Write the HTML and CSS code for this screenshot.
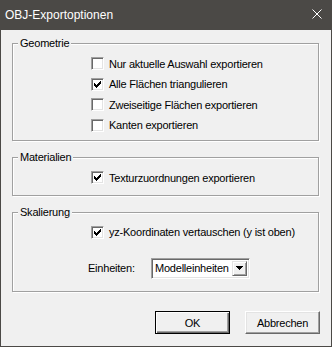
FILE: index.html
```html
<!DOCTYPE html>
<html lang="de">
<head>
<meta charset="utf-8">
<title>OBJ-Exportoptionen</title>
<link rel="stylesheet" href="styles.css">
</head>
<body>
<div class="window">
  <div class="titlebar">
    <span class="title">OBJ-Exportoptionen</span>
    <svg class="close" width="10" height="10" viewBox="0 0 10 10"><path d="M0.5 0.5L9.5 9.5M9.5 0.5L0.5 9.5" stroke="#fff" stroke-width="1" fill="none"/></svg>
  </div>
  <div class="content">
    <div class="group group-geo">
      <div class="legend">Geometrie</div>
      <div class="rows">
        <div class="row"><span class="cb"></span><span>Nur aktuelle Auswahl exportieren</span></div>
        <div class="row"><span class="cb"><svg class="check" width="7" height="7" viewBox="0 0 7 7"><path d="M6,0h1v1h-1z M5,1h2v1h-2z M0,2h1v1h-1z M4,2h3v1h-3z M0,3h2v1h-2z M3,3h3v1h-3z M0,4h5v1h-5z M1,5h3v1h-3z M2,6h1v1h-1z" fill="#000" shape-rendering="crispEdges"/></svg></span><span>Alle Flächen triangulieren</span></div>
        <div class="row"><span class="cb"></span><span>Zweiseitige Flächen exportieren</span></div>
        <div class="row"><span class="cb"></span><span>Kanten exportieren</span></div>
      </div>
    </div>
    <div class="group group-mat">
      <div class="legend">Materialien</div>
      <div class="rows">
        <div class="row"><span class="cb"><svg class="check" width="7" height="7" viewBox="0 0 7 7"><path d="M6,0h1v1h-1z M5,1h2v1h-2z M0,2h1v1h-1z M4,2h3v1h-3z M0,3h2v1h-2z M3,3h3v1h-3z M0,4h5v1h-5z M1,5h3v1h-3z M2,6h1v1h-1z" fill="#000" shape-rendering="crispEdges"/></svg></span><span>Texturzuordnungen exportieren</span></div>
      </div>
    </div>
    <div class="group group-scale">
      <div class="legend">Skalierung</div>
      <div class="rows">
        <div class="row"><span class="cb"><svg class="check" width="7" height="7" viewBox="0 0 7 7"><path d="M6,0h1v1h-1z M5,1h2v1h-2z M0,2h1v1h-1z M4,2h3v1h-3z M0,3h2v1h-2z M3,3h3v1h-3z M0,4h5v1h-5z M1,5h3v1h-3z M2,6h1v1h-1z" fill="#000" shape-rendering="crispEdges"/></svg></span><span>yz-Koordinaten vertauschen (y ist oben)</span></div>
        <div class="unit-row">
          <span class="unit-label">Einheiten:</span>
          <div class="combo">
            <span class="combo-text">Modelleinheiten</span>
            <span class="combo-btn"><svg width="7" height="4" viewBox="0 0 7 4"><path d="M0,0h7v1h-7z M1,1h5v1h-5z M2,2h3v1h-3z M3,3h1v1h-1z" fill="#000" shape-rendering="crispEdges"/></svg></span>
          </div>
        </div>
      </div>
    </div>
    <div class="buttons">
      <div class="btn btn-default">OK</div>
      <div class="btn">Abbrechen</div>
    </div>
  </div>
</div>
</body>
</html>
```
FILE: styles.css
```css
html, body {
  margin: 0;
  padding: 0;
  background: #f0f0f0;
}
.window {
  width: 332px;
  height: 347px;
  box-sizing: border-box;
  border: 1px solid #4b4946;
  background: #f0f0f0;
  display: flex;
  flex-direction: column;
  font-family: "Liberation Sans", Arial, sans-serif;
  font-size: 11px;
  letter-spacing: -0.22px;
  color: #000;
}
.titlebar {
  height: 29px;
  flex: none;
  background: #4b4946;
  color: #fff;
  display: flex;
  align-items: center;
  justify-content: space-between;
  padding: 0 9px 0 4px;
  letter-spacing: 0;
}
.title {
  font-size: 12px;
  line-height: 16px;
  padding-bottom: 2px;
}
.close {
  display: block;
  margin-bottom: 4px;
}
.content {
  flex: 1;
  display: flex;
  flex-direction: column;
  padding: 13px 11px 0 11px;
}
.group {
  border: 1px solid #a0a0a0;
  box-shadow: 1px 1px 0 #fff, inset 1px 1px 0 #fff;
  margin-right: 1px;
}
.group + .group {
  margin-top: 16px;
}
.legend {
  margin: -7px 0 0 5px;
  padding: 0 2px;
  width: fit-content;
  line-height: 13px;
  background: #f0f0f0;
}
.rows {
  padding-left: 78px;
}
.group-geo .rows {
  padding-top: 3.5px;
  padding-bottom: 4.5px;
}
.group-mat .rows {
  padding-top: 3.5px;
  padding-bottom: 7px;
}
.group-scale .rows {
  padding-top: 3px;
  padding-bottom: 12.5px;
}
.row {
  height: 20.5px;
  display: flex;
  align-items: center;
  gap: 5px;
}
.cb {
  width: 13px;
  height: 13px;
  box-sizing: border-box;
  background: #fff;
  border: 1px solid;
  border-color: #a0a0a0 #fff #fff #a0a0a0;
  box-shadow: inset 1px 1px 0 #696969, inset -1px -1px 0 #e3e3e3;
  display: flex;
  align-items: center;
  justify-content: center;
  flex: none;
}
.check {
  display: block;
}
.unit-row {
  margin-top: 15px;
  margin-left: -3px;
  height: 21px;
  display: flex;
  align-items: center;
}
.unit-label {
  width: 63px;
}
.combo {
  width: 99px;
  height: 21px;
  box-sizing: border-box;
  background: #fff;
  border: 1px solid;
  border-color: #a0a0a0 #fff #fff #a0a0a0;
  box-shadow: inset 1px 1px 0 #696969, inset -1px -1px 0 #e3e3e3;
  padding: 2px;
  display: flex;
  align-items: stretch;
}
.combo-text {
  flex: 1;
  display: flex;
  align-items: center;
  padding-left: 1px;
}
.combo-btn {
  width: 15px;
  box-sizing: border-box;
  background: #f0f0f0;
  border: 1px solid;
  border-color: #e3e3e3 #696969 #696969 #e3e3e3;
  box-shadow: inset 1px 1px 0 #fff, inset -1px -1px 0 #a0a0a0;
  display: flex;
  align-items: center;
  justify-content: center;
}
.combo-btn svg {
  display: block;
}
.buttons {
  margin-top: 19px;
  display: flex;
  justify-content: flex-end;
  gap: 15px;
}
.btn {
  width: 75px;
  height: 23px;
  box-sizing: border-box;
  border: 1px solid;
  border-color: #fff #696969 #696969 #fff;
  box-shadow: inset -1px -1px 0 #a0a0a0, inset 1px 1px 0 #e3e3e3;
  background: #f0f0f0;
  display: flex;
  align-items: center;
  justify-content: center;
}
.btn-default {
  border-color: #000;
  box-shadow: inset 1px 1px 0 #fff, inset -1px -1px 0 #696969, inset -2px -2px 0 #a0a0a0;
}
```
